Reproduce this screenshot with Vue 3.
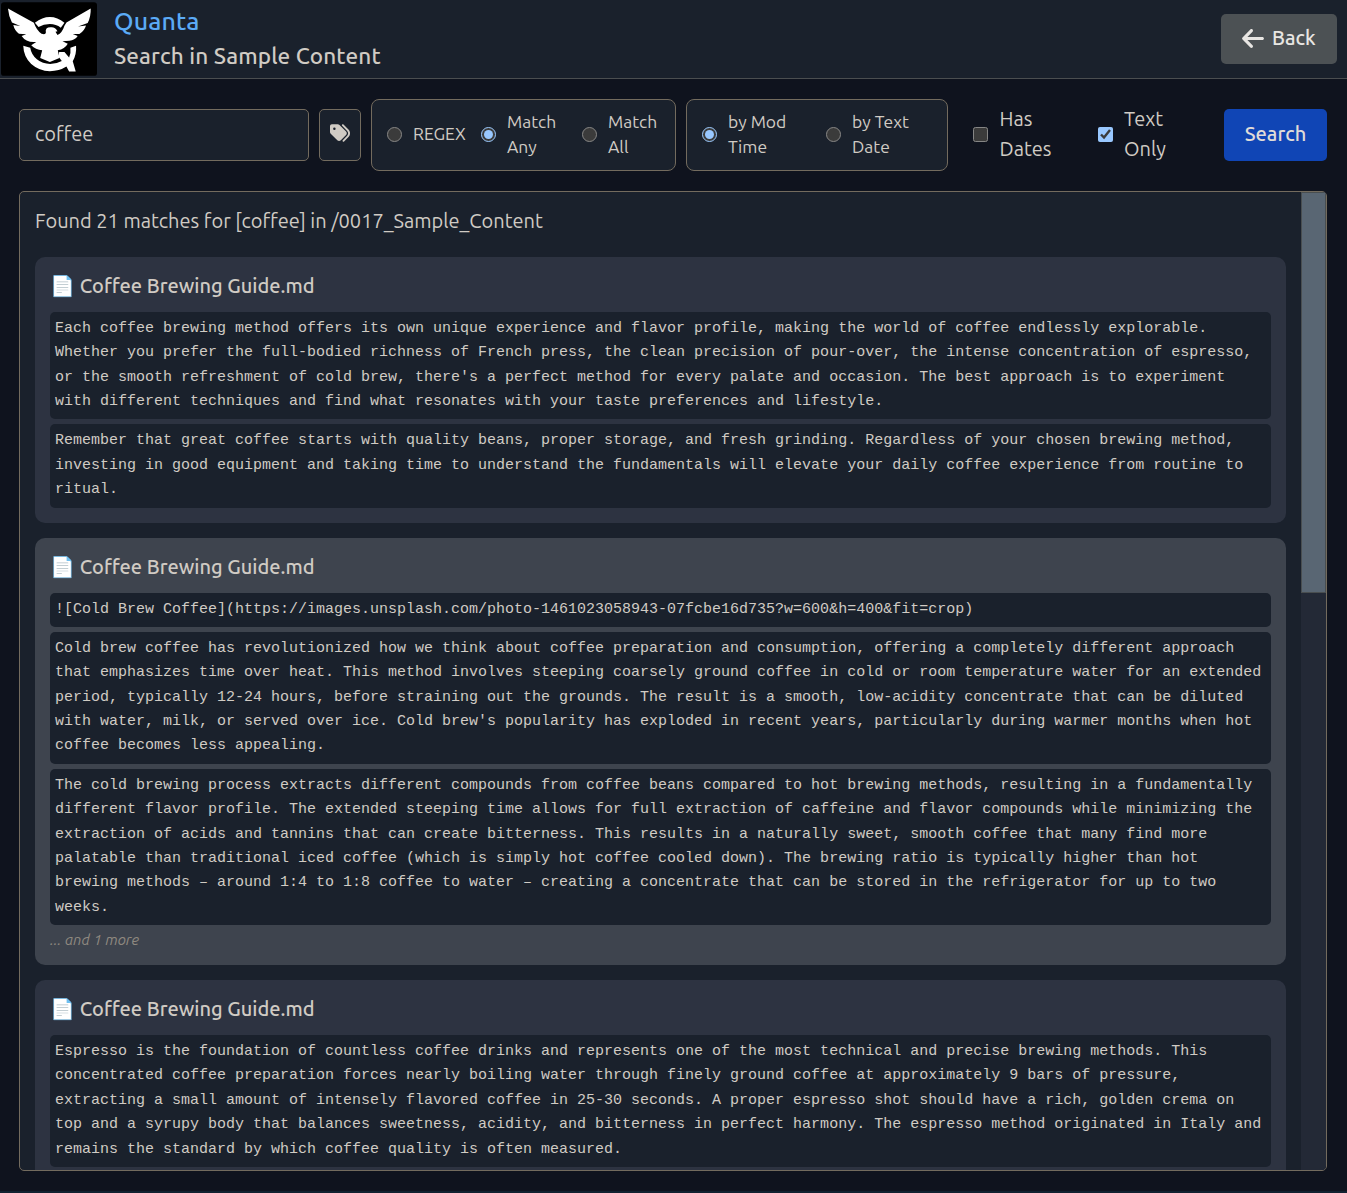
<script setup>
import { ref } from 'vue'

const query = ref('coffee')
const matchMode = ref('any')
const sortMode = ref('mod')
const hasDates = ref(false)
const textOnly = ref(true)

const results = [
  {
    file: 'Coffee Brewing Guide.md',
    blocks: [
      "Each coffee brewing method offers its own unique experience and flavor profile, making the world of coffee endlessly explorable. Whether you prefer the full-bodied richness of French press, the clean precision of pour-over, the intense concentration of espresso, or the smooth refreshment of cold brew, there's a perfect method for every palate and occasion. The best approach is to experiment with different techniques and find what resonates with your taste preferences and lifestyle.",
      'Remember that great coffee starts with quality beans, proper storage, and fresh grinding. Regardless of your chosen brewing method, investing in good equipment and taking time to understand the fundamentals will elevate your daily coffee experience from routine to ritual.'
    ]
  },
  {
    file: 'Coffee Brewing Guide.md',
    hover: true,
    more: 1,
    blocks: [
      '![Cold Brew Coffee](https://images.unsplash.com/photo-1461023058943-07fcbe16d735?w=600&h=400&fit=crop)',
      "Cold brew coffee has revolutionized how we think about coffee preparation and consumption, offering a completely different approach that emphasizes time over heat. This method involves steeping coarsely ground coffee in cold or room temperature water for an extended period, typically 12-24 hours, before straining out the grounds. The result is a smooth, low-acidity concentrate that can be diluted with water, milk, or served over ice. Cold brew's popularity has exploded in recent years, particularly during warmer months when hot coffee becomes less appealing.",
      'The cold brewing process extracts different compounds from coffee beans compared to hot brewing methods, resulting in a fundamentally different flavor profile. The extended steeping time allows for full extraction of caffeine and flavor compounds while minimizing the extraction of acids and tannins that can create bitterness. This results in a naturally sweet, smooth coffee that many find more palatable than traditional iced coffee (which is simply hot coffee cooled down). The brewing ratio is typically higher than hot brewing methods – around 1:4 to 1:8 coffee to water – creating a concentrate that can be stored in the refrigerator for up to two weeks.'
    ]
  },
  {
    file: 'Coffee Brewing Guide.md',
    blocks: [
      'Espresso is the foundation of countless coffee drinks and represents one of the most technical and precise brewing methods. This concentrated coffee preparation forces nearly boiling water through finely ground coffee at approximately 9 bars of pressure, extracting a small amount of intensely flavored coffee in 25-30 seconds. A proper espresso shot should have a rich, golden crema on top and a syrupy body that balances sweetness, acidity, and bitterness in perfect harmony. The espresso method originated in Italy and remains the standard by which coffee quality is often measured.'
    ]
  }
]
</script>

<template>
  <div class="page">
    <header class="top">
      <svg class="logo" viewBox="2 6 289 222">
        <rect x="2" y="6" width="289" height="222" rx="9" fill="#000" />
        <g fill="#fff">
          <path d="M104 68Q126 51 149 51T193 68L182 83Q168 72 149 72T115 81Z" />
          <path d="M69 137L90 143Q93 163 110 178Q127 192 150 192Q169 192 185 183L176 171L177 156H193L207 173Q213 158 211 143L228 137Q230 162 218 184L227 215H207L199 200Q177 214 149 214Q117 213 93 192Q70 170 69 137Z" />
          <path d="M23 25L101 68Q109 91 124 101Q136 105 137 98Q134 82 151 82Q165 80 172 94L166 95L172 105Q186 99 193 77L199 67L272 25Q273 48 263 69L234 79L258 76Q253 92 238 102L218 102L233 108Q224 121 208 122L187 124L203 131Q194 147 173 151L178 174L149 186L120 174L126 151Q106 149 93 136L108 126Q78 129 64 108L78 103L56 101Q43 92 39 75L60 78L35 67Q25 49 23 25Z" />
        </g>
      </svg>
      <div class="titles">
        <div class="brand">Quanta</div>
        <div class="sub">Search in Sample Content</div>
      </div>
      <button class="back">
        <svg viewBox="0 0 448 512"><path fill="currentColor" d="M9.400 233.400c-12.500 12.500-12.500 32.800 0 45.300l160 160c12.500 12.500 32.800 12.500 45.300 0s12.500-32.800 0-45.300L109.200 288 416 288c17.700 0 32-14.300 32-32s-14.300-32-32-32l-306.700 0L214.600 118.600c12.500-12.500 12.500-32.800 0-45.300s-32.800-12.500-45.300 0l-160 160z" /></svg>
        <span>Back</span>
      </button>
    </header>

    <main>
      <div class="controls">
        <input v-model="query" class="query" type="text">
        <button class="tags">
          <svg viewBox="0 0 512 512"><path fill="currentColor" d="M345 39.100L472.800 168.400c52.400 53 52.400 138.200 0 191.200L360.800 472.900c-9.300 9.400-24.500 9.500-33.900 .2s-9.500-24.500-.2-33.900L438.600 325.900c33.900-34.300 33.900-89.400 0-123.700L310.900 72.900c-9.300-9.400-9.200-24.600 .2-33.900s24.600-9.200 33.900 .2zM0 229.500L0 80C0 53.500 21.500 32 48 32l149.500 0c17 0 33.300 6.700 45.300 18.700l168 168c25 25 25 65.500 0 90.500L277.300 442.700c-25 25-65.500 25-90.500 0l-168-168C6.700 262.700 0 246.500 0 229.500zM144 144a32 32 0 1 0 -64 0 32 32 0 1 0 64 0z" /></svg>
        </button>
        <div class="group modes">
          <label class="regex"><input v-model="matchMode" type="radio" value="regex"><span>REGEX</span></label>
          <label class="any"><input v-model="matchMode" type="radio" value="any"><span>Match<br>Any</span></label>
          <label><input v-model="matchMode" type="radio" value="all"><span>Match<br>All</span></label>
        </div>
        <div class="group order">
          <label class="mod"><input v-model="sortMode" type="radio" value="mod"><span>by Mod<br>Time</span></label>
          <label><input v-model="sortMode" type="radio" value="text"><span>by Text<br>Date</span></label>
        </div>
        <label class="dates"><input v-model="hasDates" type="checkbox"><span>Has<br>Dates</span></label>
        <label class="only"><input v-model="textOnly" type="checkbox"><span>Text<br>Only</span></label>
        <button class="go">Search</button>
      </div>

      <section class="panel">
        <div class="list">
          <p class="found">Found 21 matches for [coffee] in /0017_Sample_Content</p>
          <article v-for="(r, i) in results" :key="i" class="card" :class="{ hover: r.hover }">
            <h3>📄 {{ r.file }}</h3>
            <pre v-for="(b, j) in r.blocks" :key="j">{{ b }}</pre>
            <p v-if="r.more" class="more">... and {{ r.more }} more</p>
          </article>
        </div>
        <div class="track"><div class="thumb"></div></div>
      </section>
    </main>
  </div>
</template>

<style>
body { background: #0f131e; }
</style>

<style scoped>
* { box-sizing: border-box; }
.page {
  height: 1193px;
  display: flex;
  flex-direction: column;
  overflow: hidden;
  color-scheme: dark;
  color: #d0cbc4;
  background: #0f131e;
  border-bottom: 2px solid #112130;
  font: 400 20px/30px Ubuntu, "Noto Sans", sans-serif;
}
button, input { font: inherit; color: inherit; margin: 0; }
p, h3, pre { margin: 0; }
.top {
  flex: none;
  height: 79px;
  display: flex;
  align-items: center;
  padding: 0 10px 1px 1px;
  background: #1a212c;
  border-bottom: 1px solid #4b4e50;
}
.logo { width: 96px; height: 74px; }
.titles { margin-left: 17px; flex: 1; font-weight: 500; letter-spacing: .13px; }
.brand { font-size: 25px; line-height: 35px; color: #5babf7; }
.sub { font-size: 22.500px; line-height: 34px; }
.back {
  width: 116px;
  height: 50px;
  display: flex;
  align-items: center;
  justify-content: center;
  gap: 7.500px;
  border: 0;
  padding: 0 0 1px;
  border-radius: 5px;
  background: #4c5154;
  color: #e8e6e3;
  font-weight: 500;
}
.back svg { width: 22px; height: 25px; }
main { flex: 1; min-height: 0; padding: 20px 20px 20px 19px; display: flex; flex-direction: column; }
.controls { flex: none; display: flex; align-items: center; gap: 10px; height: 72px; }
.query, .tags, .group { background: #1a212c; border: 1px solid #736b5e; border-radius: 5px; }
.query { width: 290px; height: 52px; padding: 0 15px 3px; outline: 0; }
.tags { width: 42px; height: 52px; padding: 0; display: flex; align-items: center; justify-content: center; }
.tags svg { width: 20px; height: 20px; margin-bottom: 4px; }
.group { height: 72px; display: flex; align-items: center; gap: 15px; padding: 0 15px; border-radius: 8px; font-size: 17.500px; line-height: 25px; }
.modes { width: 305px; }
.order { width: 262px; }
label { display: flex; align-items: center; gap: 11px; padding-bottom: 2px; }
label input { width: 15px; height: 15px; flex: none; }
.regex { width: 79px; }
.regex span { padding-bottom: 2px; }
.any { width: 86px; }
.mod { width: 109px; }
.dates { margin-left: 15px; width: 115px; gap: 11.600px; }
.only { width: 116px; }
.go { width: 103px; height: 52px; padding: 0 0 2px; border: 0; border-radius: 5px; background: #1045b5; color: #e0ddd8; font-weight: 500; }
.panel { margin-top: 20px; height: 980px; flex: none; display: flex; border: 1px solid #736b5e; border-radius: 5px; background: #1a212c; overflow: hidden; }
.list { flex: 1; min-width: 0; padding: 14px 15px; overflow: hidden; }
.found { margin-bottom: 20.900px; }
.card { padding: 15px; margin-bottom: 15px; border-radius: 10px; background: #2d3341; }
.card.hover { background: #3e444e; }
h3 { height: 30px; margin-bottom: 10px; font-size: 20px; line-height: 28px; font-weight: 500; }
.card pre { padding: 5px; border-radius: 5px; background: #1a212c; font: 15px/24.375px "Liberation Mono", monospace; white-space: pre-wrap; }
.card pre + pre { margin-top: 5px; }
.more { margin-top: 5px; font-size: 15px; line-height: 20px; font-style: italic; color: #8f8980; }
.track { width: 25px; background: #232936; }
.thumb { height: 401px; background: #596673; border: 1px solid #494e50; }
</style>
